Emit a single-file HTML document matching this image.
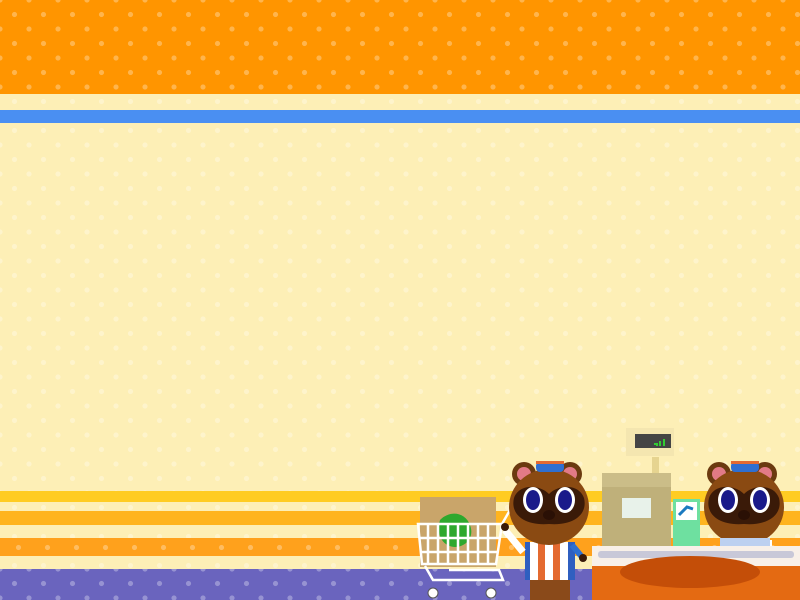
<!DOCTYPE html>
<html><head><style>
html,body{margin:0;padding:0;}
body{width:800px;height:600px;overflow:hidden;position:relative;background:#fdefb6;font-family:"Liberation Sans",sans-serif;}
.b{position:absolute;left:0;width:800px;}
.dots{background-image:radial-gradient(circle,rgba(255,255,255,.3) 2.3px,transparent 2.8px),radial-gradient(circle,rgba(255,255,255,.3) 2.3px,transparent 2.8px);background-size:29px 29px;background-position:0 0,14.5px 14.5px;}
</style></head><body>
<div class="b dots" style="top:0;height:600px;"></div>
<div class="b dots" style="top:0;height:94px;background-color:#ff9500;"></div>
<div class="b dots" style="top:110px;height:13px;background-color:#4a8ff2;background-position:5px 6px,19px 6px;background-size:29px 29px;"></div>
<div class="b dots" style="top:491px;height:11px;background-color:#ffcc22;background-position:4px 5px,18px 5px;"></div>
<div class="b dots" style="top:511px;height:14px;background-color:#ffb41e;background-position:4px 7px,18px 7px;"></div>
<div class="b dots" style="top:538px;height:18px;background-color:#ffa11c;background-position:4px -5px,18px 9px;"></div>
<div class="b dots" style="top:569px;height:31px;background-color:#6a64be;"></div>
<svg width="800" height="600" style="position:absolute;left:0;top:0">
<defs>
<g id="head">
<circle cx="524" cy="474" r="12" fill="#6b3a10"/><circle cx="524" cy="474" r="7" fill="#e27a86"/>
<circle cx="570" cy="474" r="12" fill="#6b3a10"/><circle cx="570" cy="474" r="7" fill="#e27a86"/>
<ellipse cx="549" cy="507" rx="40" ry="38" fill="#8a4a12"/>
<path d="M514 498c5-14 25-14 35-4 10-10 30-10 35 4 4 16-10 28-35 26-25 2-39-10-35-26z" fill="#3a1a08"/>
<ellipse cx="533" cy="500" rx="10" ry="13" fill="#fff"/><ellipse cx="533" cy="500" rx="7" ry="10" fill="#1a1a8a"/>
<ellipse cx="565" cy="500" rx="10" ry="13" fill="#fff"/><ellipse cx="565" cy="500" rx="7" ry="10" fill="#1a1a8a"/>
<ellipse cx="549" cy="515" rx="6" ry="5" fill="#2a1005"/>
<rect x="536" y="462" width="28" height="10" rx="4" fill="#2f6fd0"/><rect x="536" y="461" width="28" height="3" fill="#e46a30"/>
</g>
</defs>
<!-- bag + cart -->
<rect x="420" y="497" width="76" height="70" fill="#c9a56a"/>
<path d="M440 520c10-10 25-8 30 5s-5 22-15 22-20-10-15-27z" fill="#2ea82e"/>
<g stroke="#fff" stroke-width="2.5" fill="none">
<path d="M418 524h84l-6 40h-74z"/>
<path d="M428 524v40M438 524v40M448 524v40M458 524v40M468 524v40M478 524v40M488 524v40M420 538h80M420 552h78"/>
<path d="M502 524l8-14M425 566l8 14h70l-4-10h-50"/>
</g>
<circle cx="433" cy="593" r="5" fill="#fff" stroke="#555"/><circle cx="491" cy="593" r="5" fill="#fff" stroke="#555"/>
<!-- register -->
<rect x="626" y="428" width="48" height="28" fill="#f4e6b0"/>
<rect x="635" y="434" width="36" height="14" fill="#444"/>
<path d="M654 444h2M657 443v3M660 441v5M664 439v7" stroke="#3c3" stroke-width="2"/>
<rect x="652" y="457" width="7" height="17" fill="#e6d490"/>
<rect x="602" y="473" width="69" height="14" fill="#cbbd88"/>
<rect x="602" y="487" width="69" height="60" fill="#bfb07a"/>
<rect x="622" y="498" width="29" height="20" fill="#e8f2ea"/>
<rect x="673" y="499" width="27" height="47" fill="#6ee0a0"/>
<rect x="676" y="502" width="21" height="18" fill="#fff"/><path d="M679 515l8-8 6 2" stroke="#1a7ac0" stroke-width="3" fill="none"/>
<!-- second tanuki (behind counter) -->
<path d="M722 540h50v10h-50z" fill="#fff"/><path d="M732 540h30l5 10h-40z" fill="#2f5fc0"/>
<use href="#head" transform="translate(195,0)"/>
<rect x="720" y="538" width="50" height="8" fill="#bcd0f0"/>
<!-- counter -->
<rect x="592" y="546" width="208" height="20" fill="#f8f0e8"/>
<rect x="598" y="551" width="196" height="7" rx="3" fill="#c8c8d8"/>
<rect x="592" y="566" width="208" height="34" fill="#e46a12"/>
<ellipse cx="690" cy="572" rx="70" ry="16" fill="#c44e08"/>
<!-- first tanuki -->
<rect x="530" y="575" width="40" height="25" fill="#8a4a1a"/>
<path d="M525 542h50v38h-50z" fill="#2f5fc0"/>
<path d="M530 542h8v38h-8zM545 542h8v38h-8zM560 542h8v38h-8z" fill="#fff"/>
<path d="M538 542h7v38h-7zM553 542h7v38h-7z" fill="#e46a30"/>
<path d="M505 530l18 22" stroke="#fff" stroke-width="7"/><path d="M572 545l10 12" stroke="#2f6fd0" stroke-width="6"/>
<circle cx="505" cy="527" r="4" fill="#3a1a08"/><circle cx="583" cy="558" r="4" fill="#3a1a08"/>
<use href="#head"/>
</svg>
</body></html>
